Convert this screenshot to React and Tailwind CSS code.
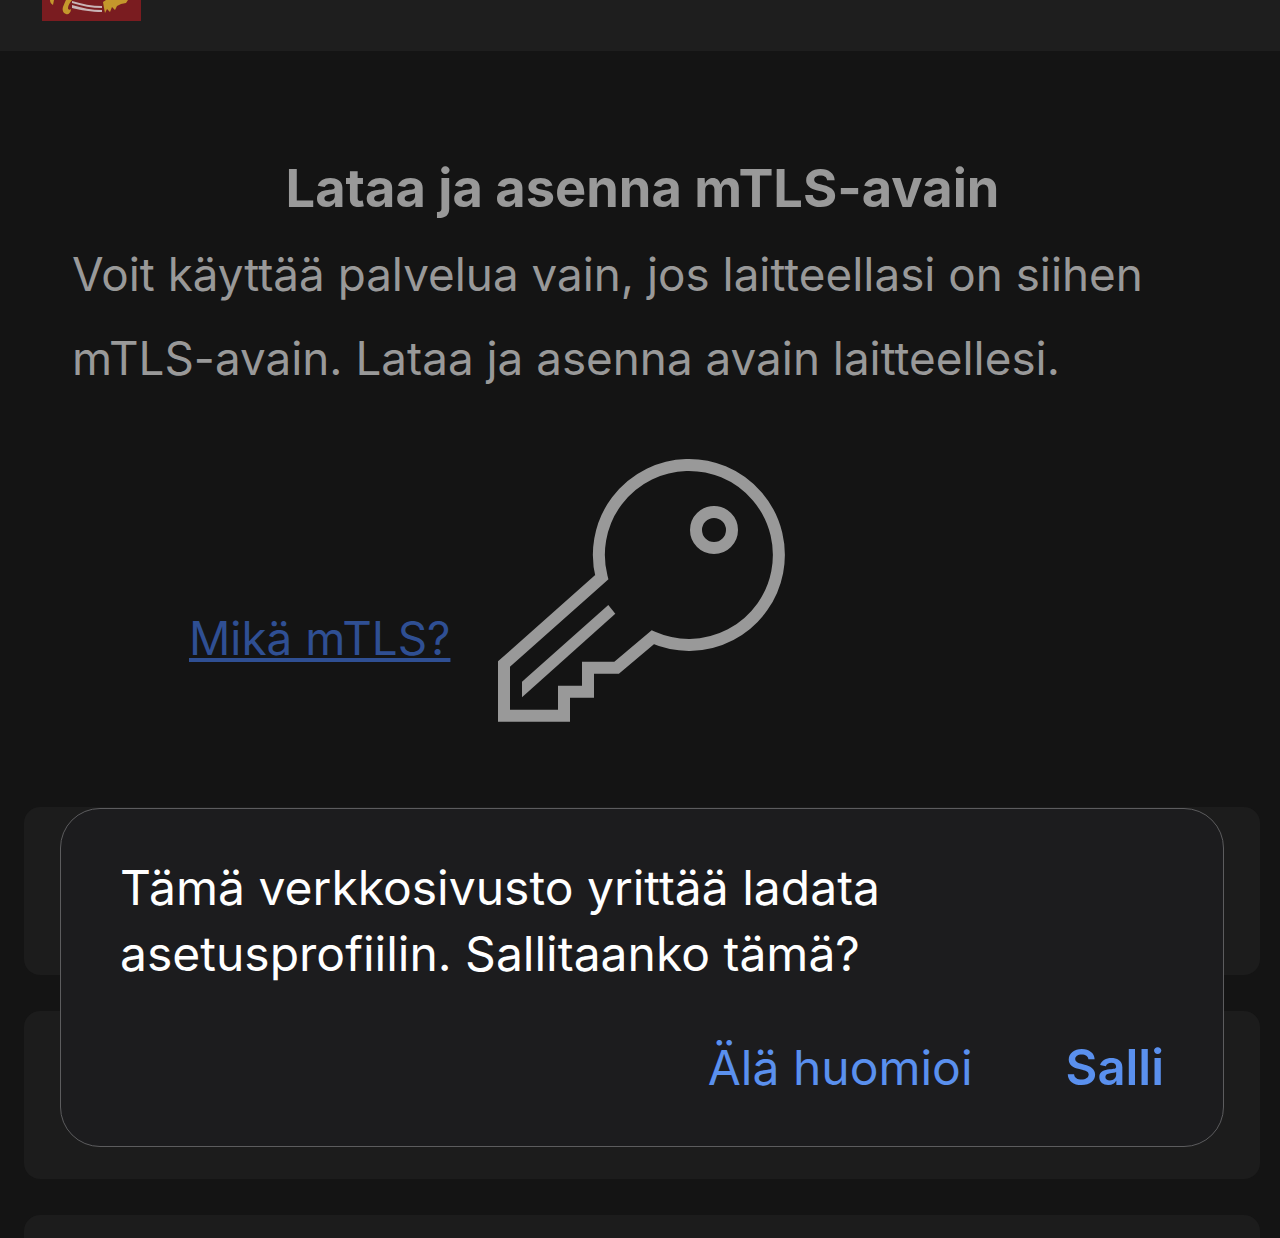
import React from 'react';

const KeyIcon = () => (
  <svg width="320" height="290" viewBox="0 0 320 290" fill="none" className="block shrink-0">
    <path
      d="M121.7 128.3 L24 215 V266.7 H84 V242.7 H108 V218.7 H136.7 L172.7 188.3 A90 90 0 1 0 121.7 128.3 Z"
      stroke="#999999"
      strokeWidth="12"
      strokeMiterlimit="10"
    />
    <path d="M128.3 156 L135.3 164.7 L42 248.3 V232.7 Z" fill="#999999" />
    <circle cx="234" cy="81" r="18" stroke="#999999" strokeWidth="12" />
  </svg>
);

// Only the lower edge of the coat of arms is on screen
const Logo = () => (
  <svg width="99" height="21" viewBox="0 0 99 21" className="block">
    <rect width="99" height="21" fill="#7a1c20" />
    <path d="M8 0 H12 L11 5 C9 4 8 2 8 0 Z" fill="#c4972c" />
    <path d="M24 0 H30 C28 3 26 5 26 8 C26 10 28 10 29 9 C29 13 26 15 24 14 C21 13 20 10 21 7 C22 4 23 2 24 0 Z" fill="#c4972c" />
    <path d="M61 2 L64 0 H86 L84 3 L79 4 L75 6 L73 10 L70 7 L68 12 L65 9 L63 13 L62 8 Z" fill="#c4972c" />
    <path d="M30 1 C40 4 50 6 60 6 L60 8 C50 8 40 6 30 3 Z" fill="#c9b4b6" />
    <path d="M30 5 C40 8 50 10 60 10 L60 12 C50 12 38 10 30 8 Z" fill="#c9b4b6" />
  </svg>
);

const App = () => {
  return (
    <div className="relative h-[1238px] w-[1280px] overflow-hidden bg-[#141414] font-['Inter',sans-serif]">
      {/* Header */}
      <div className="flex h-[51px] items-start bg-[#1e1e1e] pl-[42px]">
        <Logo />
      </div>

      {/* Content */}
      <div className="pt-[106px]">
        <h1 className="pl-[5px] text-center text-[52.4px] leading-[62px] font-bold text-[#999999]">
          Lataa ja asenna mTLS-avain
        </h1>
        <p className="mt-[14px] w-[1200px] pl-[72px] text-[45.8px] leading-[84px] text-[#999999]">
          Voit käyttää palvelua vain, jos laitteellasi on siihen mTLS-avain. Lataa ja asenna avain laitteellesi.
        </p>

        <div className="mt-[48px] flex items-end pl-[189px]">
          <a className="mb-[72px] w-[261px] text-[45.8px] leading-[56px] whitespace-nowrap text-[#2f4f93] underline">
            Mikä mTLS?
          </a>
          <div className="ml-[30px]">
            <KeyIcon />
          </div>
        </div>

        {/* Cards behind the dialog */}
        <div className="mt-[68px] mr-5 ml-6 flex flex-col gap-9">
          <div className="h-[168px] rounded-2xl bg-[#1c1c1c]" />
          <div className="h-[168px] rounded-2xl bg-[#1c1c1c]" />
          <div className="h-[168px] rounded-2xl bg-[#1c1c1c]" />
        </div>
      </div>

      {/* iOS alert */}
      <div className="absolute top-[808px] left-[60px] h-[339px] w-[1164px] rounded-[40px] border border-[#5c5c5e] bg-[#1c1c1e] px-[59px] pt-[46px]">
        <p className="text-[48px] leading-[66px] text-white">
          Tämä verkkosivusto yrittää ladata
          <br />
          asetusprofiilin. Sallitaanko tämä?
        </p>
        <div className="mt-[48px] flex items-baseline justify-end gap-[93px] text-[48px] leading-[66px] text-[#5a90ee]">
          <span>Älä huomioi</span>
          <span className="text-[49px] font-semibold">Salli</span>
        </div>
      </div>
    </div>
  );
};

export default App;
